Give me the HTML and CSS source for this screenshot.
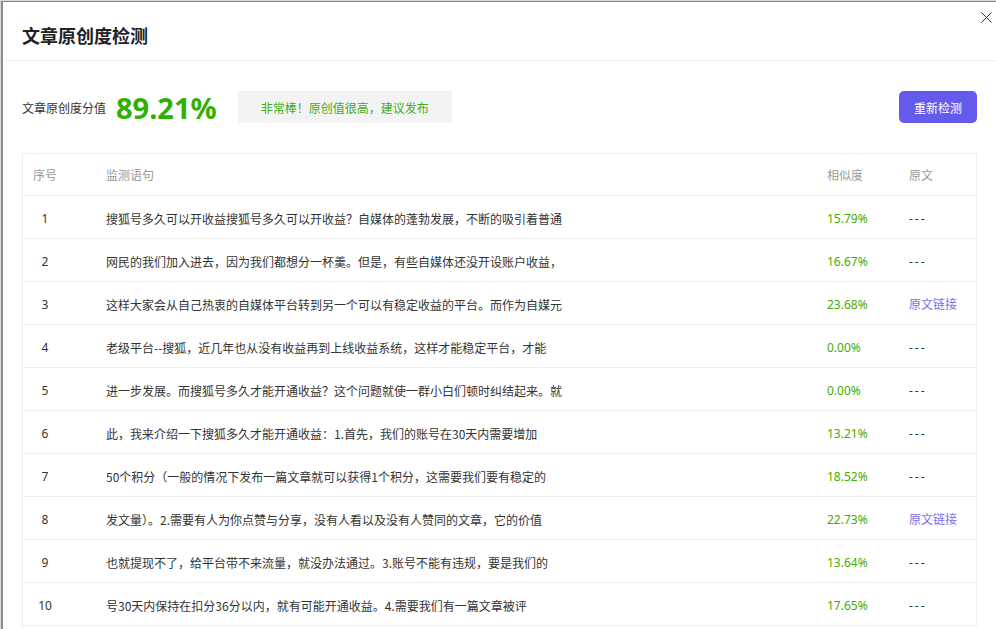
FILE: index.html
```html
<!DOCTYPE html>
<html lang="zh-CN">
<head>
<meta charset="utf-8">
<title>文章原创度检测</title>
<link rel="stylesheet" href="styles.css">
</head>
<body>
<div class="page">
  <div class="dialog">
    <button class="close" aria-label="关闭">
      <svg width="11" height="11" viewBox="0 0 11 11"><path d="M0.5 0.5 L10.5 10.5 M10.5 0.5 L0.5 10.5" stroke="#333" stroke-width="1" fill="none"/></svg>
    </button>
    <div class="dialog-header">
      <h1 class="title">文章原创度检测</h1>
    </div>
    <div class="dialog-body">
      <div class="score-row">
        <span class="score-label">文章原创度分值</span>
        <span class="score-value">89.21%</span>
        <span class="score-tip">非常棒！原创值很高，建议发布</span>
        <button class="recheck">重新检测</button>
      </div>
      <div class="table">
        <div class="row head">
          <div class="cell idx"><span>序号</span></div>
          <div class="cell">监测语句</div>
          <div class="cell">相似度</div>
          <div class="cell">原文</div>
        </div>
        <div class="row">
          <div class="cell idx"><span>1</span></div>
          <div class="cell text">搜狐号多久可以开收益搜狐号多久可以开收益？自媒体的蓬勃发展，不断的吸引着普通</div>
          <div class="cell pct">15.79%</div>
          <div class="cell src">---</div>
        </div>
        <div class="row">
          <div class="cell idx"><span>2</span></div>
          <div class="cell text">网民的我们加入进去，因为我们都想分一杯羹。但是，有些自媒体还没开设账户收益，</div>
          <div class="cell pct">16.67%</div>
          <div class="cell src">---</div>
        </div>
        <div class="row">
          <div class="cell idx"><span>3</span></div>
          <div class="cell text">这样大家会从自己热衷的自媒体平台转到另一个可以有稳定收益的平台。而作为自媒元</div>
          <div class="cell pct">23.68%</div>
          <div class="cell src"><a class="link" href="#">原文链接</a></div>
        </div>
        <div class="row">
          <div class="cell idx"><span>4</span></div>
          <div class="cell text">老级平台--搜狐，近几年也从没有收益再到上线收益系统，这样才能稳定平台，才能</div>
          <div class="cell pct">0.00%</div>
          <div class="cell src">---</div>
        </div>
        <div class="row">
          <div class="cell idx"><span>5</span></div>
          <div class="cell text">进一步发展。而搜狐号多久才能开通收益？这个问题就使一群小白们顿时纠结起来。就</div>
          <div class="cell pct">0.00%</div>
          <div class="cell src">---</div>
        </div>
        <div class="row">
          <div class="cell idx"><span>6</span></div>
          <div class="cell text">此，我来介绍一下搜狐多久才能开通收益：1.首先，我们的账号在30天内需要增加</div>
          <div class="cell pct">13.21%</div>
          <div class="cell src">---</div>
        </div>
        <div class="row">
          <div class="cell idx"><span>7</span></div>
          <div class="cell text">50个积分（一般的情况下发布一篇文章就可以获得1个积分，这需要我们要有稳定的</div>
          <div class="cell pct">18.52%</div>
          <div class="cell src">---</div>
        </div>
        <div class="row">
          <div class="cell idx"><span>8</span></div>
          <div class="cell text">发文量）。2.需要有人为你点赞与分享，没有人看以及没有人赞同的文章，它的价值</div>
          <div class="cell pct">22.73%</div>
          <div class="cell src"><a class="link" href="#">原文链接</a></div>
        </div>
        <div class="row">
          <div class="cell idx"><span>9</span></div>
          <div class="cell text">也就提现不了，给平台带不来流量，就没办法通过。3.账号不能有违规，要是我们的</div>
          <div class="cell pct">13.64%</div>
          <div class="cell src">---</div>
        </div>
        <div class="row">
          <div class="cell idx"><span>10</span></div>
          <div class="cell text">号30天内保持在扣分36分以内，就有可能开通收益。4.需要我们有一篇文章被评</div>
          <div class="cell pct">17.65%</div>
          <div class="cell src">---</div>
        </div>
      </div>
    </div>
  </div>
</div>
</body>
</html>
```

FILE: styles.css
```css
html, body {
  margin: 0;
  padding: 0;
  height: 100%;
  overflow: hidden;
}
body {
  background: #d8d8d8;
  font-family: "Noto Sans", "Noto Sans CJK SC", sans-serif;
  color: #333;
}
.page {
  padding: 1px 0 0 1px;
}
.dialog {
  position: relative;
  background: #fff;
  border-top: 1px solid #8c8c8c;
  border-left: 2px solid #8c8c8c;
  min-height: 640px;
}
.close {
  position: absolute;
  top: 10px;
  right: 4px;
  width: 11px;
  height: 11px;
  padding: 0;
  border: 0;
  background: none;
  display: flex;
}
.dialog-header {
  height: 59px;
  box-sizing: border-box;
  padding: 8px 19px 0;
  display: flex;
  align-items: center;
  border-bottom: 1px solid #f0f0f0;
}
.title {
  margin: 0;
  font-size: 18px;
  font-weight: 700;
  color: #222;
  font-family: "Noto Sans CJK SC", sans-serif;
}
.dialog-body {
  padding: 30px 19px 0;
}
.score-row {
  display: flex;
  align-items: center;
  height: 32px;
}
.score-label {
  font-size: 12px;
  font-family: "Noto Sans CJK SC", sans-serif;
  color: #333;
  margin-right: 10px;
}
.score-value {
  font-size: 29px;
  font-weight: 700;
  color: #32b000;
  margin-right: 21px;
  line-height: 32px;
  margin-top: 2px;
}
.score-tip {
  width: 214px;
  height: 32px;
  background: #f3f3f3;
  color: #3fae18;
  font-size: 12px;
  font-family: "Noto Sans CJK SC", sans-serif;
  display: flex;
  align-items: center;
  justify-content: center;
}
.recheck {
  margin-left: auto;
  width: 78px;
  height: 32px;
  border: 0;
  border-radius: 5px;
  background: #665aec;
  color: #fff;
  font-size: 12px;
  font-family: "Noto Sans CJK SC", sans-serif;
  padding: 0;
}
.table {
  margin-top: 30px;
  border: 1px solid #eeeeee;
  border-bottom: 0;
}
.row {
  display: grid;
  grid-template-columns: 73px 1fr 82px 77px;
  height: 42px;
  align-items: center;
  border-bottom: 1px solid #eeeeee;
  font-size: 12px;
}
.row.head {
  height: 41px;
  color: #9a9a9a;
}
.row:not(.head) .cell {
  padding-top: 2px;
}
.cell {
  padding: 0 10px;
  white-space: nowrap;
  overflow: hidden;
  font-family: "Noto Sans CJK SC", sans-serif;
}
.idx span {
  display: inline-block;
  width: 24px;
  text-align: center;
  font-family: "Noto Sans", "Noto Sans CJK SC", sans-serif;
  margin-top: -3px;
}
.head .idx span {
  margin-top: 0;
  font-family: "Noto Sans CJK SC", sans-serif;
}
.text {
  color: #333;
}
.pct {
  color: #3fae00;
  font-family: "Noto Sans", sans-serif;
}
.src {
  color: #333;
  font-family: "Noto Sans", sans-serif;
  letter-spacing: 2px;
}
.link {
  color: #7b6cf0;
  text-decoration: none;
  letter-spacing: 0;
  font-family: "Noto Sans CJK SC", sans-serif;
}
```
